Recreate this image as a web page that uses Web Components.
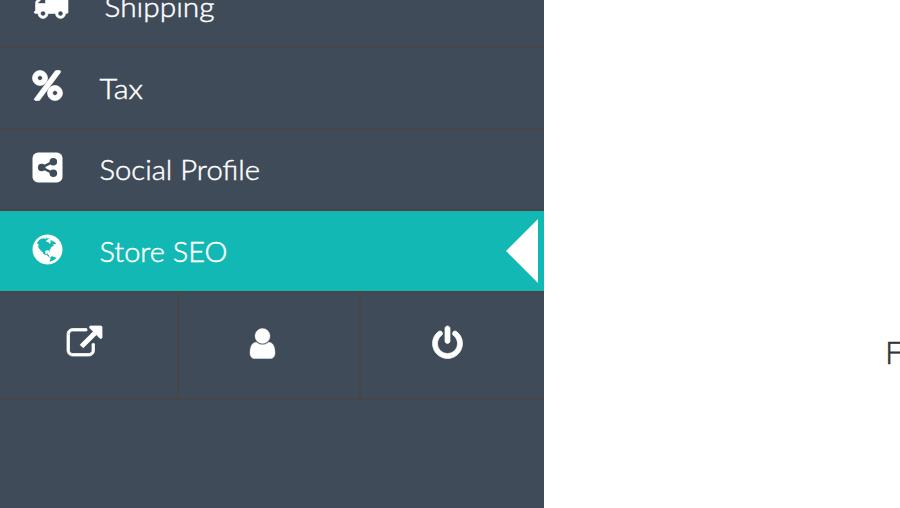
<!DOCTYPE html>
<html lang="en"><head><meta charset="utf-8"><title>Store settings</title>
<style>html,body{margin:0;height:100%;overflow:hidden;background:#fff}</style></head>
<body>
<app-shell>
  <side-menu slot="side">
    <menu-item class="first" icon="truck" label="Shipping" size="110"></menu-item>
    <menu-item icon="percent" label="Tax" size="43.5"></menu-item>
    <menu-item icon="share" label="Social Profile" size="160.5"></menu-item>
    <menu-item active icon="globe" label="Store SEO" size="128"></menu-item>
    <quick-bar slot="footer"></quick-bar>
  </side-menu>
  <span>F</span>
</app-shell>
<script>
const ICONS={
truck:'<path d="M640 1408q0-52-38-90t-90-38-90 38-38 90 38 90 90 38 90-38 38-90zm-384-512h384v-256h-158q-13 0-22 9l-195 195q-9 9-9 22v30zm1280 512q0-52-38-90t-90-38-90 38-38 90 38 90 90 38 90-38 38-90zm256-1088v1024q0 15-4 26.5t-13.5 18.5-16.5 11.5-23.5 6-22.5 2-25.5 0-22.5-.5q0 106-75 181t-181 75-181-75-75-181h-384q0 106-75 181t-181 75-181-75-75-181h-64q-3 0-22.5.5t-25.5 0-22.5-2-23.5-6-16.5-11.5-13.5-18.5-4-26.5q0-26 19-45t45-19v-320q0-8-.5-35t0-38 2.5-34.5 6.5-37 14-30.5 22.5-30l198-198q19-19 50.5-32t58.5-13h160v-192q0-26 19-45t45-19h1024q26 0 45 19t19 45z"/>',
percent:'<path d="M1408 1280q0-52-38-90t-90-38-90 38-38 90 38 90 90 38 90-38 38-90zm-768-768q0-52-38-90t-90-38-90 38-38 90 38 90 90 38 90-38 38-90zm1024 768q0 159-112.5 271.5t-271.5 112.5-271.5-112.5-112.5-271.5 112.5-271.5 271.5-112.5 271.5 112.5 112.5 271.5zm-96-1088q0 20-13 38l-1056 1408q-19 26-51 26h-160q-26 0-45-19t-19-45q0-20 13-38l1056-1408q19-26 51-26h160q26 0 45 19t19 45zm-672 320q0 159-112.5 271.5t-271.5 112.5-271.5-112.5-112.5-271.5 112.5-271.5 271.5-112.5 271.5 112.5 112.5 271.5z"/>',
share:'<rect x="128" y="128" width="1536" height="1536" rx="288"/><g fill="#404b59" stroke="#404b59"><path d="M1195 597L597 896l598 299" fill="none" stroke-width="125"/><g stroke="none"><circle cx="1195" cy="597" r="192"/><circle cx="597" cy="896" r="192"/><circle cx="1195" cy="1195" r="192"/></g></g>',
globe:'<path d="M896 128q209 0 385.5 103t279.5 279.5 103 385.5-103 385.5-279.5 279.5-385.5 103-385.5-103-279.5-279.5-103-385.5 103-385.5 279.5-279.5 385.5-103zm274 521q-2 1-9.5 9.5t-13.5 9.5q2 0 4.5-5t5-11 3.5-7q6-7 22-15 14-6 52-12 34-8 51 11-2-2 9.5-13t14.5-12q3-2 15-4.5t15-7.5l2-22q-12 1-17.5-7t-6.5-21q0 2-6 8 0-7-4.5-8t-11.5 1-9 1q-10-3-15-7.5t-8-16.5-4-15q-2-5-9.5-11t-9.5-10q-1-2-2.5-5.5t-3-6.5-4-5.5-5.5-2.5-7 5-7.5 10-4.5 5q-3-2-6-1.5t-4.5 1-4.5 3-5 3.5q-3 2-8.5 3t-8.5 2q15-5-1-11-10-4-16-3 9-4 7.5-12t-8.5-14h5q-1-4-8.5-8.5t-17.5-8.5-13-6q-8-5-34-9.5t-33-.5q-5 6-4.5 10.5t4 14 3.5 12.5q1 6-5.5 13t-6.5 12q0 7 14 15.5t10 21.5q-3 8-16 16t-16 12q-5 8-1.5 18.5t10.5 16.5q2 2 1.5 4t-3.5 4.5-5.5 4-6.5 3.5l-3 2q-11 5-20.5-6t-13.5-26q-7-25-16-30-23-8-29 1-5-13-41-26-25-9-58-4 6-1 0-15-7-15-19-12 3-6 4-17.5t1-13.5q3-13 12-23 1-1 7-8.5t9.5-13.5.5-6q35 4 50-11 5-5 11.5-17t10.5-17q9-6 14-5.5t14.5 5.5 14.5 5q14 1 15.5-11t-7.5-20q12 1 3-17-4-7-8-9-12-4-27 5-8 4 2 8-1-1-9.5 10.5t-16.5 17.5-16-5q-1-1-5.5-13.5t-9.5-13.5q-8 0-16 15 3-8-11-15t-24-8q19-12-8-27-7-4-20.5-5t-19.5 4q-5 7-5.5 11.5t5 8 10.5 5.5 11.5 4 8.5 3q14 10 8 14-2 1-8.5 3.5t-11.5 4.5-6 4q-3 4 0 14t-2 14q-5-5-9-17.5t-7-16.5q7 9-25 6l-10-1q-4 0-16 2t-20.5 1-13.5-8q-4-8 0-20 1-4 4-2-4-3-11-9.5t-10-8.5q-46 15-94 41 6 1 12-1 5-2 13-6.5t10-5.5q34-14 42-7l5-5q14 16 20 25-7-4-30-1-20 6-22 12 7 12 5 18-4-3-11.5-10t-14.5-11-15-5q-16 0-22 1-146 80-235 222 7 7 12 8 4 1 5 9t2.5 11 11.5-3q9 8 3 19 1-1 44 27 19 17 21 21 3 11-10 18-1-2-9-9t-9-4q-3 5 .5 18.5t10.5 12.5q-7 0-9.5 16t-2.5 35.5-1 23.5l2 1q-3 12 5.5 34.5t21.5 19.5q-13 3 20 43 6 8 8 9 3 2 12 7.5t15 10 10 10.5q4 5 10 22.5t14 23.5q-2 6 9.5 20t10.5 23q-1 0-2.5 1t-2.5 1q3 7 15.5 14t15.5 13q1 3 2 10t3 11 8 2q2-20-24-62-15-25-17-29-3-5-5.5-15.5t-4.5-14.5q2 0 6 1.5t8.5 3.5 7.5 4 2 3q-3 7 2 17.5t12 18.5 17 19 12 13q6 6 14 19.5t0 13.5q9 0 20 10.5t17 19.5q5 8 8 26t5 24q2 7 8.5 13.5t12.5 9.5l16 8 13 7q5 2 18.5 10.5t21.5 11.5q10 4 16 4t14.5-2.5 13.5-3.5q15-2 29 15t21 21q36 19 55 11-2 1 .5 7.5t8 15.5 9 14.5 5.5 8.5q5 6 18 15t18 15q6-4 7-9-3 8 7 20t18 10q14-3 14-32-31 15-49-18 0-1-2.5-5.5t-4-8.5-2.5-8.5 0-7.5 5-3q9 0 10-3.5t-2-12.5-4-13q-1-8-11-20t-12-15q-5 9-16 8t-16-9q0 1-1.5 5.5t-1.5 6.5q-13 0-15-1 1-3 2.5-17.5t3.5-22.5q1-4 5.5-12t7.5-14.5 4-12.5-4.5-9.5-17.5-2.5q-19 1-26 20-1 3-3 10.5t-5 11.5-9 7q-7 3-24 2t-24-5q-13-8-22.5-29t-9.5-37q0-10 2.5-26.5t3-25-5.5-24.5q3-2 9-9.5t10-10.5q2-1 4.5-1.5t4.5 0 4-1.5 3-6q-1-1-4-3-3-3-4-3 7 3 28.5-1.5t27.5 1.5q15 11 22-2 0-1-2.5-9.5t-.5-13.5q5 27 29 9 3 3 15.5 5t17.5 5q3 2 7 5.5t5.5 4.5 5-.5 8.5-6.5q10 14 12 24 11 40 19 44 7 3 11 2t4.5-9.5 0-14-1.5-12.5l-1-8v-18l-1-8q-15-3-18.5-12t1.5-18.5 15-18.5q1-1 8-3.5t15.5-6.5 12.5-8q21-19 15-35 7 0 11-9-1 0-5-3t-7.5-5-4.5-2q9-5 2-16 5-3 7.5-11t7.5-10q9 12 21 2 8-8 1-16 5-7 20.5-10.5t18.5-9.5q7 2 8-2t1-12 3-12q4-5 15-9t13-5l17-11q3-4 0-4 18 2 31-11 10-11-6-20 3-6-3-9.5t-15-5.5q3-1 11.5-.5t10.5-1.5q15-10-7-16-17-5-43 12zm-163 877q206-36 351-189-3-3-12.5-4.5t-12.5-3.5q-18-7-24-8 1-7-2.5-13t-8-9-12.5-8-11-7q-2-2-7-6t-7-5.5-7.5-4.5-8.5-2-10 1l-3 1q-3 1-5.5 2.5t-5.5 3-4 3 0 2.5q-21-17-36-22-5-1-11-5.5t-10.5-7-10-1.5-11.5 7q-5 5-6 15t-2 13q-7-5 0-17.5t2-18.5q-3-6-10.5-4.5t-12 4.5-11.5 8.5-9 6.5-8.5 5.5-8.5 7.5q-3 4-6 12t-5 11q-2-4-11.5-6.5t-9.5-5.5q2 10 4 35t5 38q7 31-12 48-27 25-29 40-4 22 12 26 0 7-8 20.5t-7 21.5q0 6 2 16z"/>',
link:'<path d="M1408 928v320q0 119-84.5 203.5t-203.5 84.5h-832q-119 0-203.5-84.5t-84.5-203.5v-832q0-119 84.5-203.5t203.5-84.5h704q14 0 23 9t9 23v64q0 14-9 23t-23 9h-704q-66 0-113 47t-47 113v832q0 66 47 113t113 47h832q66 0 113-47t47-113v-320q0-14 9-23t23-9h64q14 0 23 9t9 23zm384-864v512q0 26-19 45t-45 19-45-19l-176-176-652 652q-10 10-23 10t-23-10l-114-114q-10-10-10-23t10-23l652-652-176-176q-19-19-19-45t19-45 45-19h512q26 0 45 19t19 45z"/>',
user:'<path d="M1536 1399q0 109-62.5 187t-150.5 78h-854q-88 0-150.5-78t-62.5-187q0-85 8.5-160.5t31.5-152 58.5-131 94-89 134.5-34.5q131 128 313 128t313-128q76 0 134.5 34.5t94 89 58.5 131 31.5 152 8.5 160.5zm-256-887q0 159-112.5 271.5t-271.5 112.5-271.5-112.5-112.5-271.5 112.5-271.5 271.5-112.5 271.5 112.5 112.5 271.5z"/>',
power:'<path d="M1664 896q0 156-61 298t-164 245-245 164-298 61-298-61-245-164-164-245-61-298q0-182 80.5-343t226.5-270q43-32 95.5-25t83.5 50q32 42 24.5 94.5t-49.5 84.5q-98 74-151.5 181t-53.5 228q0 104 40.5 198.5t109.5 163.5 163.5 109.5 198.5 40.5 198.5-40.5 163.5-109.5 109.5-163.5 40.5-198.5q0-121-53.5-228t-151.5-181q-42-32-49.5-84.5t24.5-94.5q31-43 84-50t95 25q146 109 226.5 270t80.5 343zm-640-768v640q0 52-38 90t-90 38-90-38-38-90v-640q0-52 38-90t90-38 90 38 38 90z"/>'};
const WEIGHT={truck:30,percent:36,link:40,power:36,user:20,globe:0,share:0};
const def=(n,f)=>customElements.define(n,class extends HTMLElement{
  connectedCallback(){if(!this.shadowRoot)this.attachShadow({mode:'open'}).innerHTML=f(this)}});
def('app-shell',()=>`<style>:host{display:flex;height:508px}
main{flex:1;overflow:hidden;box-sizing:border-box;padding:332px 0 0 341px;font:300 32px/40px Lato,sans-serif;color:#333;-webkit-text-stroke:.6px #333}</style>
<slot name="side"></slot><main><slot></slot></main>`);
def('side-menu',()=>`<style>:host{display:flex;flex-direction:column;width:544px;background:#404b59;color:#fff;overflow:hidden}
nav{display:flex;flex-direction:column}</style><nav><slot></slot></nav><slot name="footer"></slot>`);
def('fa-icon',e=>{const n=e.getAttribute('name'),w=WEIGHT[n];return `<style>:host{display:block;width:35px;height:35px}svg{display:block;overflow:visible}</style>
<svg width="35" height="35" viewBox="0 0 1792 1792" fill="#fff"${w?` stroke="#fff" stroke-width="${w}"`:''}>${ICONS[n]}</svg>`});
def('menu-item',e=>`<style>:host{display:grid;grid-template-columns:70px 1fr;box-sizing:border-box;height:81.5px;flex:none;
padding:20px 0 0 29.5px;border-bottom:2px solid #464648;position:relative}
:host(.first){height:48px;padding:0 0 0 32.5px;grid-template-columns:72px 1fr}
:host(.first) fa-icon{margin-top:-14px}:host(.first) svg{margin-top:-11px}
:host([active]){background:#12b8b3;height:82px}:host([active]) fa-icon{margin-top:.5px}
.label{display:block;height:38px;overflow:visible;margin-top:2.5px}text{font:300 28px Lato,sans-serif;fill:#fff;stroke:#fff;stroke-width:.45px}
.arrow{position:absolute;right:6px;top:8px;width:32px;height:64px;background:#fff;clip-path:polygon(100% 0,100% 100%,0 50%)}</style>
<fa-icon name="${e.getAttribute('icon')}"></fa-icon>
<svg class="label" width="240"><text x="-.5" y="28" textLength="${e.getAttribute('size')}" lengthAdjust="spacingAndGlyphs">${e.getAttribute('label')}</text></svg>
${e.hasAttribute('active')?'<div class="arrow"></div>':''}`);
def('quick-bar',()=>`<style>:host{display:grid;grid-template-columns:179px 182px 1fr;height:107px;box-sizing:border-box;border-bottom:2px solid #464648}
div{border-right:2px solid #464648;padding-top:32.5px;box-sizing:border-box}div:last-child{border:0}
.a{padding-left:67.3px}.b{padding-left:66px}.c{padding-left:69px}</style>
<div class="a"><fa-icon name="link"></fa-icon></div><div class="b"><fa-icon name="user"></fa-icon></div><div class="c"><fa-icon name="power"></fa-icon></div>`);
</script></body></html>
